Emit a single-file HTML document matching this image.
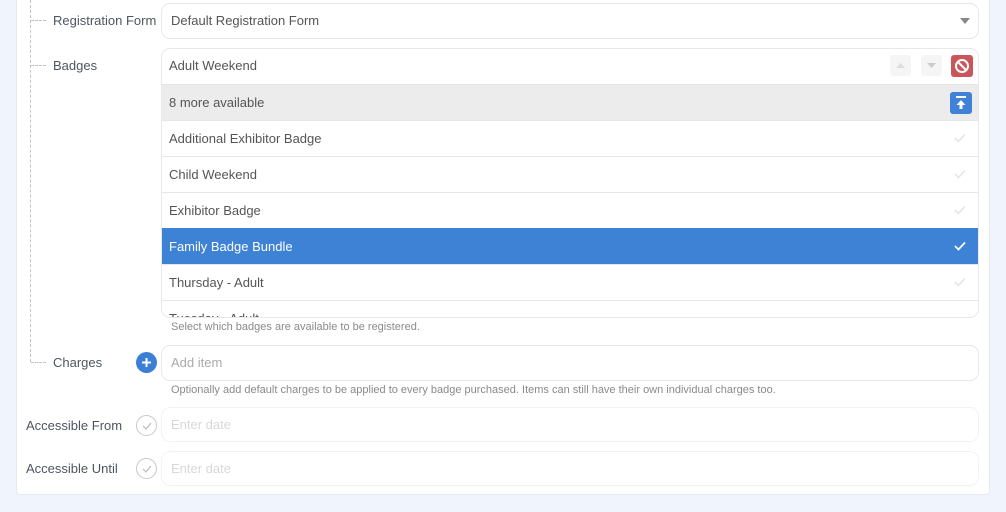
<!DOCTYPE html>
<html><head><style>
*{box-sizing:border-box;margin:0;padding:0}
body{width:1006px;height:512px;background:#f0f4fc;font-family:"Liberation Sans",sans-serif;font-size:13px;color:#555;position:relative;overflow:hidden}
.card{position:absolute;left:16px;top:-10px;width:974px;height:505px;background:#fff;border:1px solid #e6e9ef;border-radius:4px}
.a{position:absolute}
.lbl{position:absolute;font-size:13px;color:#4f5560}
.inp{position:absolute;left:161px;width:818px;border:1px solid #e8e8e8;border-radius:9px;background:#fff}
.row{position:absolute;left:0;width:816px;height:36px;border-top:1px solid #e6e6e6;padding:0 7px;line-height:35px;color:#555}
.chk{position:absolute;right:12px;top:12px;width:12px;height:10px}
.help{position:absolute;left:171px;font-size:11px;color:#8a8a8a}
.vd{border-left:1px dashed #c4c4c4}
.hd{border-top:1px dashed #c4c4c4;width:15px;height:0}
.circ{position:absolute;left:136px;width:21px;height:21px;border-radius:50%;border:1px solid #c8c8c8}
</style></head><body>
<div class="card"></div>
<div class="a vd" style="left:30px;top:0;height:362px"></div>
<div class="a hd" style="left:31px;top:20px"></div>
<div class="a hd" style="left:31px;top:65px"></div>
<div class="a hd" style="left:31px;top:362px"></div>

<div class="lbl" style="left:53px;top:13px">Registration Form</div>
<div class="inp" style="top:3px;height:36px;padding:0 9px;line-height:34px">Default Registration Form
<svg class="a" style="right:8px;top:14px" width="10" height="6"><path d="M0 0H10L5 6Z" fill="#888"/></svg></div>

<div class="lbl" style="left:53px;top:58px">Badges</div>
<div class="inp" style="top:48px;height:270px;overflow:hidden">
 <div class="row" style="top:0;border-top:none;line-height:34px">Adult Weekend
  <div class="a" style="left:728px;top:6px;width:21px;height:21px;background:#f5f5f5;border-radius:3px"><svg class="a" style="left:6px;top:8px" width="9" height="5"><path d="M0 5L4.5 0L9 5Z" fill="#ddd"/></svg></div>
  <div class="a" style="left:759px;top:6px;width:21px;height:21px;background:#f5f5f5;border-radius:3px"><svg class="a" style="left:6px;top:8px" width="9" height="5"><path d="M0 0L4.5 5L9 0Z" fill="#ccc"/></svg></div>
  <div class="a" style="left:789px;top:6px;width:22px;height:22px;background:#c9575a;border-radius:3px"><svg class="a" style="left:3px;top:3px" width="16" height="16"><circle cx="8" cy="8" r="6" stroke="#fff" stroke-width="2" fill="none"/><path d="M4 4L12 12" stroke="#fff" stroke-width="2"/></svg></div>
 </div>
 <div class="row" style="top:35px;background:#ececec;height:37px">8 more available
  <div class="a" style="left:788px;top:7px;width:22px;height:22px;background:#3f82d8;border-radius:3px"><svg class="a" style="left:5px;top:4px" width="12" height="14"><path d="M1 1H11" stroke="#fff" stroke-width="2"/><path d="M6 4L1.5 9H4.5V13H7.5V9H10.5Z" fill="#fff"/></svg></div>
 </div>
 <div class="row" style="top:71px">Additional Exhibitor Badge<svg class="chk"><path d="M1 5L4.5 8.5L11 1.5" stroke="#e4e4e4" stroke-width="1.5" fill="none"/></svg></div>
 <div class="row" style="top:107px">Child Weekend<svg class="chk"><path d="M1 5L4.5 8.5L11 1.5" stroke="#e4e4e4" stroke-width="1.5" fill="none"/></svg></div>
 <div class="row" style="top:143px">Exhibitor Badge<svg class="chk"><path d="M1 5L4.5 8.5L11 1.5" stroke="#e4e4e4" stroke-width="1.5" fill="none"/></svg></div>
 <div class="row" style="top:179px;background:#3d82d5;color:#fff;border-top-color:#3d82d5">Family Badge Bundle<svg class="chk"><path d="M1 5L4.5 8.5L11 1.5" stroke="#fff" stroke-width="1.8" fill="none"/></svg></div>
 <div class="row" style="top:215px">Thursday - Adult<svg class="chk"><path d="M1 5L4.5 8.5L11 1.5" stroke="#e4e4e4" stroke-width="1.5" fill="none"/></svg></div>
 <div class="row" style="top:251px">Tuesday - Adult</div>
</div>
<div class="help" style="top:321px">Select which badges are available to be registered.</div>

<div class="lbl" style="left:53px;top:355px">Charges</div>
<div class="a" style="left:136px;top:352px;width:21px;height:21px;border-radius:50%;background:#3b7fd6"><svg class="a" style="left:5px;top:5px" width="11" height="11"><path d="M5.5 1V10M1 5.5H10" stroke="#fff" stroke-width="2"/></svg></div>
<div class="inp" style="top:345px;height:36px;padding:0 9px;line-height:34px;color:#aaa">Add item</div>
<div class="help" style="top:384px">Optionally add default charges to be applied to every badge purchased. Items can still have their own individual charges too.</div>

<div class="lbl" style="left:26px;top:418px">Accessible From</div>
<div class="circ" style="top:415px"><svg class="a" style="left:5px;top:6px" width="10" height="8"><path d="M1 4L4 7L9 1" stroke="#bbb" stroke-width="1.2" fill="none"/></svg></div>
<div class="inp" style="top:407px;height:35px;border-color:#f3f3f3;padding:0 9px;line-height:33px;color:#d8d8d8">Enter date</div>

<div class="lbl" style="left:26px;top:461px">Accessible Until</div>
<div class="circ" style="top:458px"><svg class="a" style="left:5px;top:6px" width="10" height="8"><path d="M1 4L4 7L9 1" stroke="#bbb" stroke-width="1.2" fill="none"/></svg></div>
<div class="inp" style="top:451px;height:35px;border-color:#f3f3f3;padding:0 9px;line-height:33px;color:#d8d8d8">Enter date</div>
</body></html>
